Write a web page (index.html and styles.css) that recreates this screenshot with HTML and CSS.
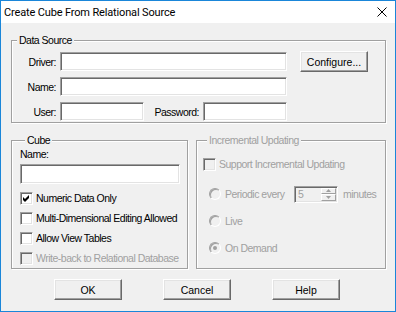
FILE: index.html
```html
<!DOCTYPE html>
<html>
<head>
  <link rel="stylesheet" href="styles.css">
</head>
<body>
  <div class="dialog">
    <!-- Title Bar -->
    <div class="titlebar">
      <span class="title">Create Cube From Relational Source</span>
      <svg class="close" width="10" height="10" viewBox="0 0 10 10">
        <path d="M0.5 0.5 L9.5 9.5 M9.5 0.5 L0.5 9.5" stroke="#000" stroke-width="1" fill="none"/>
      </svg>
    </div>

    <div class="client">
      <!-- Data Source Group -->
      <fieldset class="group data-source">
        <legend>Data Source</legend>
        <div class="ds-grid">
          <label class="ds-label">Driver:</label>
          <input class="field" type="text">
          <button class="button configure">Configure...</button>
          <label class="ds-label">Name:</label>
          <input class="field" type="text">
          <label class="ds-label">User:</label>
          <div class="user-row">
            <input class="field short" type="text">
            <label class="ds-label pass-label">Password:</label>
            <input class="field short" type="text">
          </div>
        </div>
      </fieldset>

      <div class="columns">
        <!-- Cube Group -->
        <fieldset class="group cube">
          <legend>Cube</legend>
          <div class="cube-name">Name:</div>
          <input class="field cube-input" type="text">
          <div class="check-list">
            <div class="check"><span class="box"><svg width="9" height="9" viewBox="0 0 9 9"><polygon points="1,3 3,5 7,1 7,4 3,8 1,6" fill="#000"/></svg></span>Numeric Data Only</div>
            <div class="check"><span class="box"></span>Multi-Dimensional Editing Allowed</div>
            <div class="check"><span class="box"></span>Allow View Tables</div>
            <div class="check disabled"><span class="box"></span>Write-back to Relational Database</div>
          </div>
        </fieldset>

        <!-- Incremental Updating Group -->
        <fieldset class="group incremental disabled">
          <legend>Incremental Updating</legend>
          <div class="check disabled"><span class="box"></span>Support Incremental Updating</div>
          <div class="radio-list">
            <div class="radio-row">
              <span class="radio"></span>
              <span class="periodic">Periodic every</span>
              <div class="spin">
                <span class="spin-value">5</span>
                <div class="spin-buttons">
                  <span class="spin-btn"><svg width="5" height="3" viewBox="0 0 5 3"><polygon points="2.5,0 5,3 0,3" fill="#a0a0a0"/></svg></span>
                  <span class="spin-btn"><svg width="5" height="3" viewBox="0 0 5 3"><polygon points="0,0 5,0 2.5,3" fill="#a0a0a0"/></svg></span>
                </div>
              </div>
              <span class="minutes">minutes</span>
            </div>
            <div class="radio-row"><span class="radio"></span>Live</div>
            <div class="radio-row"><span class="radio selected"></span>On Demand</div>
          </div>
        </fieldset>
      </div>

      <!-- Dialog Buttons -->
      <div class="buttons">
        <button class="button">OK</button>
        <button class="button">Cancel</button>
        <button class="button">Help</button>
      </div>
    </div>
  </div>
</body>
</html>
```

FILE: styles.css
```css
/* Main Element Styles */
* {
  box-sizing: border-box;
}
body {
  margin: 0;
  font-family: "Liberation Sans", Arial, sans-serif;
  font-size: 10.5px;
  letter-spacing: -0.5px;
  color: #000;
  background: #fff;
}
.dialog {
  width: 396px;
  height: 312px;
  border: 1px solid #1a86d9;
  background: #f0f0f0;
  display: flex;
  flex-direction: column;
}

/* Title Bar */
.titlebar {
  height: 22px;
  background: #fff;
  display: flex;
  align-items: center;
  justify-content: space-between;
  padding: 0 8px 0 3px;
}
.title {
  font-family: Roboto, "Liberation Sans", sans-serif;
  font-size: 11px;
  letter-spacing: -0.15px;
}

/* Client Area */
.client {
  padding: 11px 9px 0 10px;
}

/* Group Boxes */
.group {
  margin: 0;
  padding: 0;
  min-width: 0;
  border: 1px solid #a0a0a0;
  box-shadow: inset 1px 1px #fff, 1px 1px #fff;
}
.group legend {
  margin-left: 5px;
  padding: 0 2px;
  line-height: 13px;
  background: #f0f0f0;
}

/* Fields */
.field {
  height: 19px;
  margin: 0;
  padding: 0 2px;
  font: inherit;
  background: #fff;
  border: 1px solid;
  border-color: #a0a0a0 #fff #fff #a0a0a0;
  box-shadow: inset 1px 1px #696969, inset -1px -1px #e3e3e3;
  outline: none;
}

/* Data Source Group */
.data-source {
  padding: 5px 0 1px 0;
}
.ds-grid {
  display: grid;
  grid-template-columns: 48px 227px 13px 69px;
  grid-template-rows: repeat(3, 19px);
  row-gap: 6px;
  align-items: center;
}
.ds-grid .field {
  width: 100%;
  grid-column: 2;
}
.ds-label {
  text-align: right;
  padding-right: 4px;
  grid-column: 1;
}
.configure {
  grid-column: 4;
  grid-row: 1;
  align-self: start;
  margin-top: -1px;
  height: 22px;
}
.user-row {
  grid-column: 2;
  display: flex;
  align-items: center;
}
.user-row .field.short {
  width: 84px;
}
.pass-label {
  flex: 1;
}

/* Columns */
.columns {
  display: flex;
  gap: 8px;
  margin-top: 11px;
}
.cube {
  width: 177px;
  height: 135px;
  padding: 1px 0 0 8px;
}
.incremental {
  width: 190px;
  height: 135px;
  padding: 7px 0 0 6px;
}
.incremental legend {
  margin-left: 4px;
}
.cube-name {
  line-height: 13px;
}
.cube-input {
  width: 160px;
  height: 20px;
  margin-top: 3px;
  display: block;
}

/* Check Boxes */
.check-list {
  margin-top: 4px;
}
.check {
  display: flex;
  align-items: center;
  height: 20px;
  white-space: nowrap;
}
.box {
  width: 13px;
  height: 13px;
  margin-right: 3px;
  flex: none;
  display: flex;
  align-items: center;
  justify-content: center;
  background: #fff;
  border: 1px solid;
  border-color: #a0a0a0 #fff #fff #a0a0a0;
  box-shadow: inset 1px 1px #696969, inset -1px -1px #e3e3e3;
}
.disabled,
.disabled legend {
  color: #a0a0a0;
}
.disabled .box {
  background: #f0f0f0;
}

/* Radio Buttons */
.radio-list {
  margin-top: 10px;
  padding-left: 6px;
  display: flex;
  flex-direction: column;
  gap: 7px;
}
.radio-row {
  display: flex;
  align-items: center;
  height: 20px;
  white-space: nowrap;
}
.radio {
  width: 12px;
  height: 12px;
  margin-right: 4px;
  flex: none;
  border-radius: 50%;
  border: 1px solid;
  border-color: #a0a0a0 #fff #fff #a0a0a0;
  box-shadow: inset 1px 1px #a0a0a0;
  background: #f0f0f0;
  display: flex;
  align-items: center;
  justify-content: center;
}
.radio.selected::after {
  content: "";
  width: 4px;
  height: 4px;
  border-radius: 50%;
  background: #a0a0a0;
}
.periodic {
  width: 69px;
}

/* Spin Box */
.spin {
  width: 44px;
  height: 17px;
  display: flex;
  border: 1px solid;
  border-color: #a0a0a0 #fff #fff #a0a0a0;
  box-shadow: inset 1px 1px #696969, inset -1px -1px #e3e3e3;
  padding: 1px;
}
.spin-value {
  flex: 1;
  padding-left: 2px;
  line-height: 13px;
}
.spin-buttons {
  width: 15px;
  display: flex;
  flex-direction: column;
}
.spin-btn {
  flex: 1;
  display: flex;
  align-items: center;
  justify-content: center;
  border: 1px solid;
  border-color: #fff #a0a0a0 #a0a0a0 #fff;
}
.minutes {
  margin-left: 5px;
}

/* Button Styles */
.buttons {
  display: flex;
  gap: 41px;
  margin: 10px 0 0 43px;
}
.button {
  width: 68px;
  height: 21px;
  padding: 0;
  font: inherit;
  color: #000;
  background: #f0f0f0;
  border: 1px solid;
  border-color: #fff #696969 #696969 #fff;
  box-shadow: inset -1px -1px #a0a0a0, inset 1px 1px #e3e3e3;
}
```
